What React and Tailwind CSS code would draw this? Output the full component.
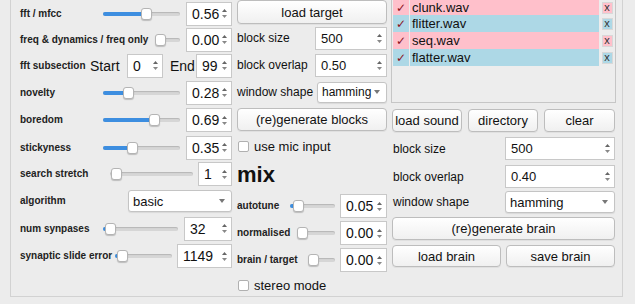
import React from "react";

const FONT = "font-['Liberation_Sans','DejaVu_Sans',Arial,sans-serif]";

function Stepper() {
  return (
    <div className="w-[9px] mr-[2px] flex flex-col items-center justify-center gap-[3px]">
      <svg width="5" height="3" viewBox="0 0 5 3">
        <path d="M0 3 L2.5 0 L5 3 Z" fill="#666" />
      </svg>
      <svg width="5" height="3" viewBox="0 0 5 3">
        <path d="M0 0 L2.5 3 L5 0 Z" fill="#888" />
      </svg>
    </div>
  );
}

function Spin({ value, w, h = "h-[24px]", text = "text-[14px]" }) {
  return (
    <div
      className={`${w} ${h} ml-auto shrink-0 bg-white border border-[#c8c8c8] flex items-center`}
    >
      <span className={`flex-1 pl-[5px] ${text} text-[#111] leading-none`}>
        {value}
      </span>
      <Stepper />
    </div>
  );
}

function Combo({ value, w, h = "h-[22px]", text = "text-[13px]" }) {
  return (
    <div
      className={`${w} ${h} ml-auto shrink-0 bg-white border border-[#c4c4c4] rounded-[3px] shadow-[0_1px_1px_rgba(0,0,0,0.08)] flex items-center overflow-hidden`}
    >
      <span className={`flex-1 pl-[4px] ${text} text-[#111] leading-none whitespace-nowrap`}>
        {value}
      </span>
      <svg width="6" height="4" viewBox="0 0 6 4" className="mr-[6px] shrink-0">
        <path d="M0 0 L3 4 L6 0 Z" fill="#777" />
      </svg>
    </div>
  );
}

function Slider({ w, v, fill = true }) {
  const px = parseInt(w.replace(/\D/g, ""), 10);
  const left = Math.round((px - 11) * v);
  return (
    <div className={`${w} h-[14px] relative shrink-0`}>
      <div className="absolute left-0 right-0 top-[5px] h-[4px] rounded-full bg-[#d6d6d6] shadow-[inset_0_1px_1px_rgba(0,0,0,0.15)]" />
      {fill && (
        <div
          className="absolute left-0 top-[5px] h-[4px] rounded-full bg-[#3d8ee0]"
          style={{ width: left + 4 }}
        />
      )}
      <div
        className="absolute top-[1px] w-[11px] h-[12px] rounded-[3px] bg-white border border-[#b4b4b4] shadow-[0_1px_1px_rgba(0,0,0,0.2)]"
        style={{ left }}
      />
    </div>
  );
}

function Button({ children, className = "" }) {
  return (
    <div
      className={`${className} border border-[#bdbdbd] rounded-[4px] bg-gradient-to-b from-white to-[#f0f0f0] shadow-[0_1px_0_rgba(0,0,0,0.05)] flex items-center justify-center text-[13px] text-[#111] leading-none`}
    >
      {children}
    </div>
  );
}

function Check({ label }) {
  return (
    <div className="flex items-center gap-[5px] pl-[1px]">
      <div className="w-[11px] h-[11px] bg-white border border-[#b0b0b0] rounded-[2px]" />
      <span className="text-[13px] text-[#111] leading-none">{label}</span>
    </div>
  );
}

const Small = ({ children, className = "" }) => (
  <span className={`${className} shrink-0 text-[10px] font-bold text-[#222] leading-none`}>
    {children}
  </span>
);

const Label = ({ children }) => (
  <span className="shrink-0 text-[12px] text-[#111] leading-none">{children}</span>
);

const files = [
  { name: "clunk.wav", bg: "bg-[#ffc0cb]", h: "h-[15px]" },
  { name: "flitter.wav", bg: "bg-[#add8e6]", h: "h-[17px]" },
  { name: "seq.wav", bg: "bg-[#ffc0cb]", h: "h-[17px]" },
  { name: "flatter.wav", bg: "bg-[#add8e6]", h: "h-[17px]" },
];

export default function App() {
  return (
    <div className={`w-[635px] h-[304px] bg-[#ececec] flex ${FONT}`}>
      <div className="ml-[10px] w-[613px] h-[297px] border-l border-r border-b border-[#d2d2d2] flex">
        {/* left column */}
        <div className="w-[226px] pl-[9px] pr-[5px] flex flex-col">
          <div className="h-[27px] flex items-center">
            <Small className="w-[83px]">fft / mfcc</Small>
            <Slider w="w-[77px]" v={0.58} />
            <Spin value="0.56" w="w-[46px]" />
          </div>
          <div className="h-[25px] flex items-center">
            <Small className="w-[135px]">freq &amp; dynamics / freq only</Small>
            <Slider w="w-[25px]" v={0} fill={false} />
            <Spin value="0.00" w="w-[46px]" />
          </div>
          <div className="h-[27px] flex items-center">
            <Small className="w-[70px]">fft subsection</Small>
            <span className="w-[37px] shrink-0 text-[14px] text-[#111] leading-none">Start</span>
            <Spin value="0" w="w-[36px]" />
            <span className="w-[33px] pl-[7px] shrink-0 text-[14px] text-[#111] leading-none">End</span>
            <Spin value="99" w="w-[36px]" />
          </div>
          <div className="h-[27px] flex items-center">
            <Small className="w-[83px]">novelty</Small>
            <Slider w="w-[77px]" v={0.31} />
            <Spin value="0.28" w="w-[46px]" />
          </div>
          <div className="h-[28px] flex items-center">
            <Small className="w-[83px]">boredom</Small>
            <Slider w="w-[77px]" v={0.7} />
            <Spin value="0.69" w="w-[46px]" />
          </div>
          <div className="h-[27px] flex items-center">
            <Small className="w-[83px]">stickyness</Small>
            <Slider w="w-[77px]" v={0.37} />
            <Spin value="0.35" w="w-[46px]" />
          </div>
          <div className="h-[26px] flex items-center">
            <Small className="w-[90px]">search stretch</Small>
            <Slider w="w-[83px]" v={0.02} fill={false} />
            <Spin value="1" w="w-[34px]" />
          </div>
          <div className="h-[28px] flex items-center">
            <Small>algorithm</Small>
            <Combo value="basic" w="w-[104px]" />
          </div>
          <div className="h-[27px] flex items-center">
            <Small className="w-[83px]">num synpases</Small>
            <Slider w="w-[75px]" v={0.03} />
            <Spin value="32" w="w-[48px]" />
          </div>
          <div className="h-[28px] flex items-center">
            <Small className="w-[95px]">synaptic slide error</Small>
            <Slider w="w-[57px]" v={0.05} />
            <Spin value="1149" w="w-[55px]" />
          </div>
        </div>

        {/* middle column */}
        <div className="w-[151px] pr-[1px] flex flex-col">
          <div className="h-[25px] flex items-start">
            <Button className="w-full h-[24px]">load target</Button>
          </div>
          <div className="h-[27px] flex items-center">
            <Label>block size</Label>
            <Spin value="500" w="w-[72px]" h="h-[23px]" text="text-[13px]" />
          </div>
          <div className="h-[27px] flex items-center">
            <Label>block overlap</Label>
            <Spin value="0.50" w="w-[72px]" h="h-[23px]" text="text-[13px]" />
          </div>
          <div className="h-[27px] flex items-center">
            <Label>window shape</Label>
            <Combo value="hamming" w="w-[70px]" h="h-[21px]" text="text-[12px]" />
          </div>
          <div className="h-[28px] flex items-center">
            <Button className="w-full h-[23px]">(re)generate blocks</Button>
          </div>
          <div className="h-[25px] flex items-center">
            <Check label="use mic input" />
          </div>
          <div className="h-[34px] flex items-center">
            <span className="text-[22px] font-bold text-[#111] leading-none">mix</span>
          </div>
          <div className="h-[28px] flex items-center">
            <Small className="w-[53px]">autotune</Small>
            <Slider w="w-[45px]" v={0.08} />
            <Spin value="0.05" w="w-[47px]" />
          </div>
          <div className="h-[26px] flex items-center">
            <Small className="w-[60px]">normalised</Small>
            <Slider w="w-[38px]" v={0} fill={false} />
            <Spin value="0.00" w="w-[47px]" />
          </div>
          <div className="h-[28px] flex items-center">
            <Small className="w-[71px]">brain / target</Small>
            <Slider w="w-[27px]" v={0} fill={false} />
            <Spin value="0.00" w="w-[47px]" />
          </div>
          <div className="h-[22px] flex items-center">
            <Check label="stereo mode" />
          </div>
        </div>

        {/* right column */}
        <div className="ml-[3px] w-[225px] flex flex-col">
          <div className="h-[103px] bg-[#ededed] border-x border-b border-[#c6c6c6] flex flex-col">
            {files.map((f) => (
              <div key={f.name} className={`${f.h} flex items-stretch`}>
                <div className={`w-[16px] ml-[1px] ${f.bg} flex items-center justify-center text-[12px] text-[#8a1020] font-['DejaVu_Sans',sans-serif] leading-none`}>
                  ✓
                </div>
                <div className={`w-[189px] ml-[1px] ${f.bg} flex items-center pl-[2px] text-[13px] text-[#111] leading-none`}>
                  {f.name}
                </div>
                <div className="flex-1 flex items-center justify-center">
                  <div className={`w-[11px] h-[12px] ${f.bg} border border-[#d8d8d8] flex items-center justify-center text-[11px] text-[#333] leading-none`}>
                    x
                  </div>
                </div>
              </div>
            ))}
          </div>
          <div className="mt-[6px] px-[1px] flex gap-[6px]">
            <Button className="w-[70px] h-[23px]">load sound</Button>
            <Button className="w-[70px] h-[23px]">directory</Button>
            <Button className="w-[71px] h-[23px]">clear</Button>
          </div>
          <div className="mt-[5px] pl-[2px] pr-[1px] flex items-center">
            <Label>block size</Label>
            <Spin value="500" w="w-[110px]" h="h-[23px]" text="text-[13px]" />
          </div>
          <div className="mt-[5px] pl-[2px] pr-[1px] flex items-center">
            <Label>block overlap</Label>
            <Spin value="0.40" w="w-[110px]" h="h-[23px]" text="text-[13px]" />
          </div>
          <div className="mt-[3px] pl-[2px] pr-[1px] flex items-center">
            <Label>window shape</Label>
            <Combo value="hamming" w="w-[110px]" />
          </div>
          <div className="mt-[4px] px-[1px]">
            <Button className="w-full h-[23px]">(re)generate brain</Button>
          </div>
          <div className="mt-[5px] px-[1px] flex gap-[5px]">
            <Button className="flex-1 h-[22px]">load brain</Button>
            <Button className="flex-1 h-[22px]">save brain</Button>
          </div>
        </div>
      </div>
    </div>
  );
}
